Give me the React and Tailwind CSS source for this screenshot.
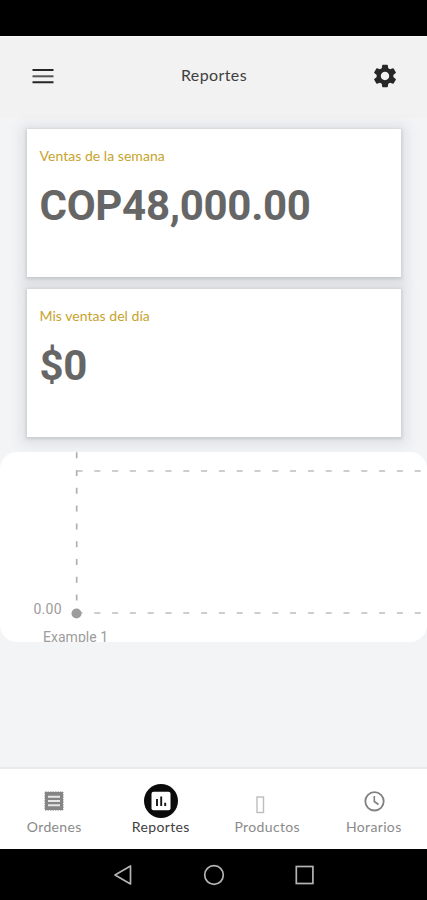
import React from 'react';

function StatCard({ label, value }) {
  return (
    <section className="h-[148px] w-[374px] bg-white pl-[12.5px] pt-[18px] shadow-[0_2px_12px_6px_rgba(70,80,80,0.1),0_1px_3px_1px_rgba(60,70,80,0.17)]">
      <h2 className="font-[Lato,sans-serif] text-[14px] leading-[18px] tracking-[0.04px] text-[#c6a32c]">{label}</h2>
      <p className="mt-[16px] font-[Roboto,sans-serif] text-[42px] font-bold leading-[50px] tracking-[-0.3px] text-[#666]">{value}</p>
    </section>
  );
}

function Chart() {
  return (
    <section className="relative mt-[15px] h-[190px] w-full overflow-hidden rounded-[17px] bg-white">
      <svg className="block" width="427" height="190" viewBox="0 0 427 190" fill="none">
        <g stroke="#bdbdbd" strokeWidth="1.5" strokeDasharray="6 11.8">
          <path d="M76.7 0.2V161" strokeWidth="1.7" stroke="#b0b0b0" />
          <path d="M76.5 19H427" />
          <path d="M76.5 161H427" />
        </g>
        <circle cx="76.5" cy="161.5" r="5" fill="#9c9c9c" />
        <g fill="#9c9c9c" fontFamily="Roboto, sans-serif" fontSize="14">
          <text x="33.5" y="161.5" textLength="28">0.00</text>
          <text x="43" y="189.7" textLength="65">Example 1</text>
        </g>
      </svg>
    </section>
  );
}

function Tab({ label, active, children }) {
  return (
    <button className="flex flex-1 flex-col items-center pt-[15px]">
      <span className="flex h-[34px] items-center justify-center">{children}</span>
      <span className={`font-[Lato,sans-serif] text-[14px] leading-[18px] tracking-[0.35px] ${active ? 'text-[#404040]' : 'text-[#8a8a8a]'}`}>{label}</span>
    </button>
  );
}

export default function App() {
  return (
    <div className="flex h-[900px] w-[427px] flex-col overflow-hidden bg-[#f2f4f6]">
      <div className="h-9 shrink-0 bg-black" />
      <header className="flex h-[82px] shrink-0 items-center justify-between border-t border-[#f9f9f9] bg-[#f2f2f2] pb-[3px] pl-[32px] pr-[28px]">
        <svg width="22" height="16" viewBox="0 0 22 16" stroke="#262626" strokeWidth="2">
          <path d="M0.5 2H21.5M0.5 14.2H21.5" />
          <path d="M0.5 8.3H21.5" stroke="#555" />
        </svg>
        <h1 className="pb-[2px] pl-[3px] font-[Lato,sans-serif] text-[16px] leading-6 tracking-[0.4px] text-[#404040]">Reportes</h1>
        <svg width="28" height="28" viewBox="0 0 24 24" fill="#262626">
          <path d="M19.14 12.94c.04-.3.06-.61.06-.94 0-.32-.02-.64-.07-.94l2.03-1.58a.49.49 0 0 0 .12-.61l-1.92-3.32a.488.488 0 0 0-.59-.22l-2.39.96c-.5-.38-1.03-.7-1.62-.94l-.36-2.54a.484.484 0 0 0-.48-.41h-3.84c-.24 0-.43.17-.47.41l-.36 2.54c-.59.24-1.13.57-1.62.94l-2.39-.96c-.22-.08-.47 0-.59.22L2.74 8.87c-.12.21-.08.47.12.61l2.03 1.58c-.05.3-.09.63-.09.94s.02.64.07.94l-2.03 1.58a.49.49 0 0 0-.12.61l1.92 3.32c.12.22.37.29.59.22l2.39-.96c.5.38 1.03.7 1.62.94l.36 2.54c.05.24.24.41.48.41h3.84c.24 0 .44-.17.47-.41l.36-2.54c.59-.24 1.13-.56 1.62-.94l2.39.96c.22.08.47 0 .59-.22l1.92-3.32c.12-.22.07-.47-.12-.61l-2.01-1.58zM12 15.6c-1.98 0-3.6-1.62-3.6-3.6s1.62-3.6 3.6-3.6 3.6 1.62 3.6 3.6-1.62 3.6-3.6 3.6z" />
        </svg>
      </header>
      <main className="flex min-h-0 flex-1 flex-col items-center pt-[11px]">
        <div className="ml-px flex flex-col gap-[12px]">
          <StatCard label="Ventas de la semana" value="COP48,000.00" />
          <StatCard label="Mis ventas del día" value="$0" />
        </div>
        <Chart />
      </main>
      <nav className="flex h-[82px] shrink-0 border-t-2 border-[#e9eaeb] bg-white pl-px">
        <Tab label="Ordenes">
          <svg width="20" height="20" viewBox="0 0 20 20">
            <path d="M1 1H19V19H1Z" fill="#858585" stroke="#858585" strokeDasharray="1.5 1" />
            <path d="M4 5.8H16M4 10H16M4 14.2H16" stroke="#e6e6e6" strokeWidth="2" />
          </svg>
        </Tab>
        <Tab label="Reportes" active>
          <svg width="34" height="34" viewBox="0 0 34 34">
            <circle cx="17" cy="17" r="17" fill="#0b0b0b" />
            <rect x="7.5" y="7.8" width="19" height="18.5" rx="2" fill="#fff" />
            <path d="M13 15V22M17.2 12.5V22M21.2 18.8V22" stroke="#161616" strokeWidth="1.9" />
          </svg>
        </Tab>
        <Tab label="Productos">
          <svg className="overflow-visible" width="20" height="20" viewBox="0 0 20 20" fill="none">
            <rect x="0" y="6" width="6.5" height="15.5" stroke="#bdbdbd" strokeWidth="1.4" />
          </svg>
        </Tab>
        <Tab label="Horarios">
          <svg width="22" height="22" viewBox="0 0 22 22" fill="none" stroke="#808080" strokeWidth="1.8">
            <circle cx="11.5" cy="11.3" r="9.2" />
            <path d="M11.3 6V11.5L15.5 14.5" strokeWidth="1.6" />
          </svg>
        </Tab>
      </nav>
      <footer className="h-[51px] shrink-0 bg-black">
        <svg className="block" width="427" height="51" viewBox="0 0 427 51" fill="none" stroke="#b4b4b4" strokeWidth="1.7">
          <path d="M130.5 17V35L115 26Z" strokeLinejoin="round" />
          <circle cx="214" cy="26" r="9.3" />
          <rect x="296.3" y="17.5" width="16.6" height="17" />
        </svg>
      </footer>
    </div>
  );
}
